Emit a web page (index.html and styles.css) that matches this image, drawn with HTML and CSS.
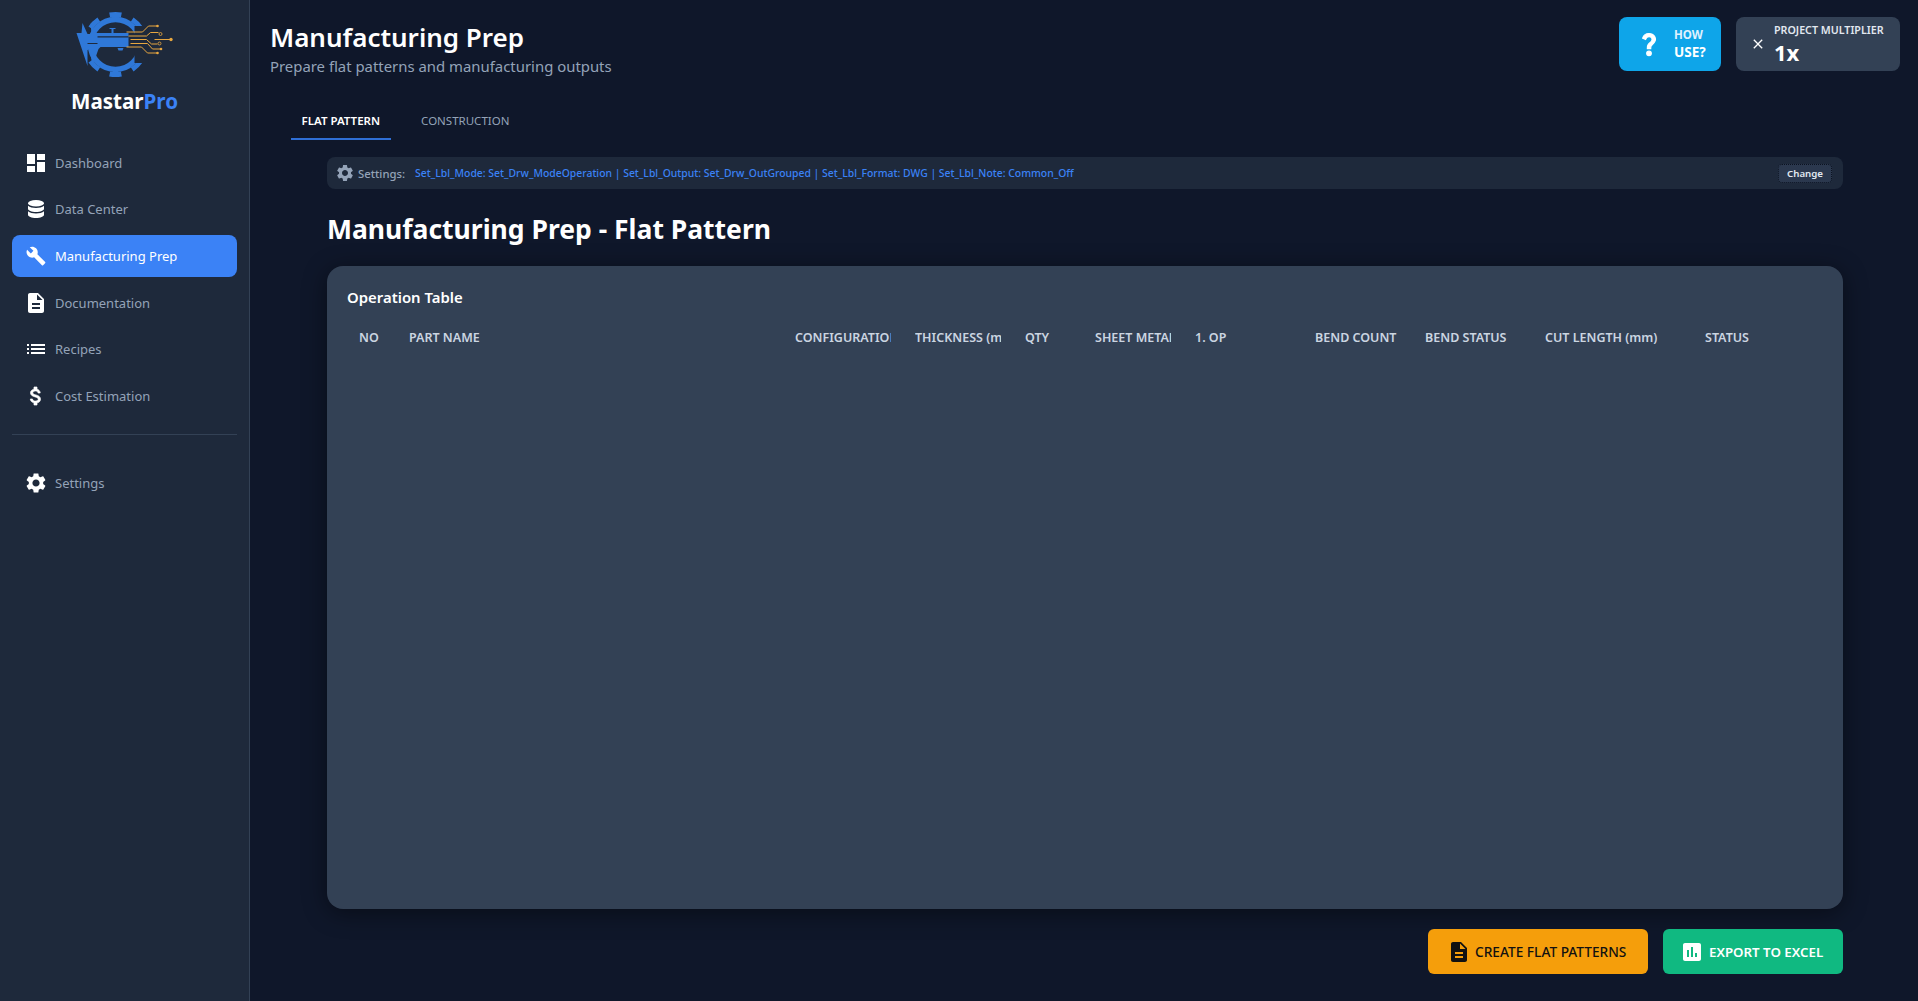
FILE: index.html
```html
<!DOCTYPE html>
<html lang="en">
<head>
<meta charset="utf-8">
<title>MastarPro - Manufacturing Prep</title>
<link rel="stylesheet" href="styles.css">
</head>
<body>
<div class="app">
  <aside class="sidebar">
    <div class="brand">
      <svg class="logo" viewBox="69.5 10 110 70" aria-hidden="true">
        <circle class="logo-ring" cx="115" cy="44.5" r="25"/>
        <circle class="logo-teeth" cx="115" cy="44.5" r="30" pathLength="80" stroke-dasharray="5 5" stroke-dashoffset="2.500"/>
        <path class="logo-mask" d="M134 26h14v37h-14z"/>
        <path class="logo-metal" d="M76 33L81 33L82 23L87 34L91 34L90 23L96 33L128 33L128 47L100 47L98 49L92 66L89 49L87 49L87 66Z"/>
        <path class="logo-slot" d="M97 36.300h31v1.200H97zM87 43h10v1H87z"/>
        <path class="logo-metal" d="M111 28h2v5h-2zM109 28h6v1h-6zM117 48h6l-1 2.500h-4z"/>
        <g class="logo-trace">
          <path d="M126 32h16l6-6h9M128 36h18l4-3.500h8M130 39.500h16l5 4.500h6M154 39.500h16M130 43.500h17l5 5.500h8M126 47h15l6 6h10"/>
        </g>
        <g class="logo-dot">
          <circle cx="157" cy="26" r="1.300"/><circle cx="170.500" cy="39.500" r="1.700"/><circle cx="160.500" cy="49" r="1.300"/><circle cx="157" cy="53" r="1.300"/>
        </g>
        <g class="logo-hollow">
          <circle cx="160" cy="34" r="1.500"/><circle cx="159" cy="43.500" r="1.500"/>
        </g>
      </svg>
      <div class="brand-name">Mastar<span class="brand-accent">Pro</span></div>
    </div>
    <nav class="nav">
      <a class="nav-item"><svg class="icon" viewBox="0 0 24 24"><path d="M3 13h8V3H3v10zm0 8h8v-6H3v6zm10 0h8V11h-8v10zm0-18v6h8V3h-8z"/></svg>Dashboard</a>
      <a class="nav-item"><svg class="icon" viewBox="0 0 24 24"><ellipse cx="12" cy="6.200" rx="8" ry="3.200"/><path d="M4 8.800v3c0 1.800 3.600 3.200 8 3.200s8-1.400 8-3.200v-3c-1.700 1.400-4.700 2.200-8 2.200s-6.300-.8-8-2.200zM4 14.300v3.500c0 1.800 3.600 3.200 8 3.200s8-1.400 8-3.200v-3.500c-1.700 1.400-4.700 2.200-8 2.200s-6.300-.8-8-2.200z"/></svg>Data Center</a>
      <a class="nav-item nav-item-active"><svg class="icon" viewBox="-2 -2 28 28"><path d="M22.700 19l-9.100-9.100c.9-2.300.4-5-1.500-6.900-2-2-5-2.400-7.400-1.300L9 6 6 9 1.600 4.700C.4 7.100.9 10.100 2.900 12.100c1.900 1.900 4.600 2.400 6.900 1.500l9.100 9.100c.4.400 1 .4 1.400 0l2.300-2.300c.5-.4.5-1.100.1-1.400z"/></svg>Manufacturing Prep</a>
      <a class="nav-item"><svg class="icon" viewBox="0 0 24 24"><path d="M14 2H6c-1.100 0-1.990.9-1.990 2L4 20c0 1.100.89 2 1.990 2H18c1.100 0 2-.9 2-2V8l-6-6zm2 16H8v-2h8v2zm0-4H8v-2h8v2zm-3-5V3.500L18.500 9H13z"/></svg>Documentation</a>
      <a class="nav-item"><svg class="icon" viewBox="0 0 24 24"><path d="M3 13h2v-2H3v2zm0 4h2v-2H3v2zm0-8h2V7H3v2zm4 4h14v-2H7v2zm0 4h14v-2H7v2zM7 7v2h14V7H7z"/></svg>Recipes</a>
      <a class="nav-item"><svg class="icon icon-heavy" viewBox="0 0 24 24"><path d="M11.800 10.900c-2.270-.59-3-1.200-3-2.150 0-1.090 1.010-1.850 2.700-1.850 1.780 0 2.440.85 2.500 2.100h2.210c-.07-1.720-1.120-3.300-3.210-3.810V3h-3v2.160c-1.940.42-3.500 1.680-3.500 3.610 0 2.310 1.910 3.460 4.700 4.130 2.500.6 3 1.480 3 2.410 0 .69-.49 1.790-2.700 1.790-2.060 0-2.870-.92-2.980-2.100h-2.200c.12 2.190 1.760 3.420 3.680 3.830V21h3v-2.150c1.950-.37 3.500-1.500 3.500-3.550 0-2.840-2.430-3.810-4.700-4.400z"/></svg>Cost Estimation</a>
      <hr class="nav-divider">
      <a class="nav-item"><svg class="icon" viewBox="0 0 24 24"><path d="M19.140 12.940c.04-.3.06-.61.06-.94 0-.32-.02-.64-.07-.94l2.030-1.580c.18-.14.23-.41.12-.61l-1.920-3.320c-.12-.22-.37-.29-.59-.22l-2.390.96c-.5-.38-1.030-.7-1.620-.94l-.36-2.540c-.04-.24-.24-.41-.48-.41h-3.840c-.24 0-.43.17-.47.41l-.36 2.540c-.59.24-1.130.57-1.620.94l-2.390-.96c-.22-.08-.47 0-.59.22L2.740 8.870c-.12.21-.08.47.12.61l2.030 1.580c-.05.3-.09.63-.09.94s.02.64.07.94l-2.030 1.580c-.18.14-.23.41-.12.61l1.920 3.320c.12.22.37.29.59.22l2.390-.96c.5.38 1.030.7 1.620.94l.36 2.540c.05.24.24.41.48.41h3.840c.24 0 .44-.17.47-.41l.36-2.540c.59-.24 1.130-.56 1.620-.94l2.390.96c.22.08.47 0 .59-.22l1.920-3.320c.12-.22.07-.47-.12-.61l-2.010-1.580zM12 15.600c-1.980 0-3.600-1.620-3.600-3.600s1.620-3.600 3.600-3.600 3.600 1.620 3.600 3.600-1.620 3.600-3.600 3.600z"/></svg>Settings</a>
    </nav>
  </aside>
  <main class="main">
    <header class="topbar">
      <div class="titles">
        <h1 class="page-title">Manufacturing Prep</h1>
        <p class="page-sub">Prepare flat patterns and manufacturing outputs</p>
      </div>
      <div class="top-actions">
        <button class="how-btn"><svg class="how-icon" viewBox="0 0 24 24"><path d="M11.070 12.850c.77-1.390 2.250-2.210 3.110-3.440.91-1.290.4-3.700-2.180-3.700-1.690 0-2.520 1.280-2.870 2.340L6.540 6.960C7.250 4.830 9.180 3 11.990 3c2.350 0 3.960 1.070 4.780 2.410.7 1.150 1.110 3.300.03 4.900-1.200 1.770-2.350 2.310-2.970 3.450-.25.46-.35.76-.35 2.240h-2.890c-.01-.78-.13-2.050.48-3.150zM14 20c0 1.100-.9 2-2 2s-2-.9-2-2 .9-2 2-2 2 .9 2 2z"/></svg><span class="how-text"><span class="how-small">HOW</span><span class="how-big">USE?</span></span></button>
        <div class="multiplier">
          <svg class="mult-icon" viewBox="0 0 24 24"><path d="M19 6.410L17.590 5 12 10.590 6.410 5 5 6.410 10.590 12 5 17.590 6.410 19 12 13.410 17.590 19 19 17.590 13.410 12z"/></svg>
          <div class="mult-text"><span class="mult-label">PROJECT MULTIPLIER</span><span class="mult-value">1x</span></div>
        </div>
      </div>
    </header>
    <div class="tabs">
      <button class="tab tab-active">FLAT PATTERN</button>
      <button class="tab">CONSTRUCTION</button>
    </div>
    <section class="content">
      <div class="settings-bar">
        <svg class="settings-icon" viewBox="0 0 24 24"><path d="M19.140 12.940c.04-.3.06-.61.06-.94 0-.32-.02-.64-.07-.94l2.030-1.580c.18-.14.23-.41.12-.61l-1.920-3.320c-.12-.22-.37-.29-.59-.22l-2.390.96c-.5-.38-1.030-.7-1.620-.94l-.36-2.540c-.04-.24-.24-.41-.48-.41h-3.840c-.24 0-.43.17-.47.41l-.36 2.540c-.59.24-1.130.57-1.620.94l-2.390-.96c-.22-.08-.47 0-.59.22L2.740 8.870c-.12.21-.08.47.12.61l2.030 1.580c-.05.3-.09.63-.09.94s.02.64.07.94l-2.030 1.580c-.18.14-.23.41-.12.61l1.920 3.320c.12.22.37.29.59.22l2.390-.96c.5.38 1.030.7 1.620.94l.36 2.540c.05.24.24.41.48.41h3.840c.24 0 .44-.17.47-.41l.36-2.540c.59-.24 1.130-.56 1.620-.94l2.390.96c.22.08.47 0 .59-.22l1.920-3.320c.12-.22.07-.47-.12-.61l-2.010-1.580zM12 15.600c-1.980 0-3.600-1.620-3.600-3.600s1.620-3.600 3.600-3.600 3.600 1.620 3.600 3.600-1.620 3.600-3.600 3.600z"/></svg>
        <span class="settings-label">Settings:</span>
        <span class="settings-value">Set_Lbl_Mode: Set_Drw_ModeOperation | Set_Lbl_Output: Set_Drw_OutGrouped | Set_Lbl_Format: DWG | Set_Lbl_Note: Common_Off</span>
        <button class="change-btn">Change</button>
      </div>
      <h2 class="section-title">Manufacturing Prep - Flat Pattern</h2>
      <div class="table-card">
        <h3 class="card-title">Operation Table</h3>
        <table class="op-table">
          <colgroup>
            <col class="c-no"><col class="c-part"><col class="c-config"><col class="c-thick"><col class="c-qty"><col class="c-sheet"><col class="c-op"><col class="c-count"><col class="c-bstatus"><col class="c-cut"><col class="c-status">
          </colgroup>
          <thead>
            <tr>
              <th><span class="th-in">NO</span></th>
              <th><span class="th-in">PART NAME</span></th>
              <th><span class="th-in">CONFIGURATION</span></th>
              <th><span class="th-in">THICKNESS (mm)</span></th>
              <th><span class="th-in">QTY</span></th>
              <th><span class="th-in">SHEET METAL</span></th>
              <th><span class="th-in">1. OP</span></th>
              <th><span class="th-in">BEND COUNT</span></th>
              <th><span class="th-in">BEND STATUS</span></th>
              <th><span class="th-in">CUT LENGTH (mm)</span></th>
              <th><span class="th-in">STATUS</span></th>
            </tr>
          </thead>
        </table>
      </div>
      <div class="actions">
        <button class="action action-orange"><svg class="action-icon" viewBox="0 0 24 24"><path d="M14 2H6c-1.100 0-1.990.9-1.990 2L4 20c0 1.100.89 2 1.990 2H18c1.100 0 2-.9 2-2V8l-6-6zm2 16H8v-2h8v2zm0-4H8v-2h8v2zm-3-5V3.500L18.500 9H13z"/></svg>CREATE FLAT PATTERNS</button>
        <button class="action action-green"><svg class="action-icon" viewBox="0 0 24 24"><path d="M19 3H5c-1.100 0-2 .9-2 2v14c0 1.100.9 2 2 2h14c1.100 0 2-.9 2-2V5c0-1.100-.9-2-2-2zM9 17H7v-7h2v7zm4 0h-2V7h2v10zm4 0h-2v-4h2v4z"/></svg>EXPORT TO EXCEL</button>
      </div>
    </section>
  </main>
</div>
</body>
</html>
```
FILE: styles.css
```css
* { box-sizing: border-box; }
html, body { margin: 0; height: 100%; }
body {
  background: #0f172a;
  color: #fff;
  font-family: "Noto Sans", "Open Sans", "Liberation Sans", sans-serif;
  overflow: hidden;
}
button { font-family: inherit; border: 0; cursor: pointer; }
h1, h2, h3, p { margin: 0; }

.app { display: flex; height: 1001px; }

.sidebar {
  width: 250px;
  flex: none;
  background: #1e293b;
  border-right: 1px solid #334155;
  padding: 10px 12px 0;
}
.brand { display: flex; flex-direction: column; align-items: center; height: 131.5px; }
.logo { width: 110px; height: 70px; flex: none; }
.logo-ring { fill: none; stroke: #2f78d8; stroke-width: 5.5; }
.logo-teeth { fill: none; stroke: #2f78d8; stroke-width: 5; }
.logo-mask { fill: #1e293b; }
.logo-metal { fill: #2f78d8; }
.logo-slot { fill: #1e293b; }
.logo-trace path { fill: none; stroke: #e8a740; stroke-width: 1; }
.logo-dot { fill: #e8a740; }
.logo-hollow { fill: none; stroke: #e8a740; stroke-width: .8; }
.brand-name { font-size: 20.6px; font-weight: 700; line-height: 30px; margin-top: 5.5px; }
.brand-accent { color: #3b82f6; }

.nav { display: flex; flex-direction: column; }
.nav-item {
  display: flex;
  align-items: center;
  gap: 7px;
  height: 42.5px;
  padding: 0 12px;
  margin-bottom: 4.1px;
  border-radius: 8px;
  font-size: 13px;
  color: #94a3b8;
}
.nav-item-active { background: #3b82f6; color: #fff; }
.icon { width: 24px; height: 24px; fill: #fff; flex: none; }
.icon-heavy { stroke: #fff; stroke-width: .7; }
.nav-divider { width: 100%; border: 0; border-top: 1px solid #334155; margin: 13px 0 27px; }

.main { flex: 1; min-width: 0; display: flex; flex-direction: column; }
.topbar { display: flex; justify-content: space-between; padding: 17px 18px 0 20px; height: 97px; }
.page-title { font-size: 26px; font-weight: 600; line-height: 38px; margin-top: 1px; }
.page-sub { font-size: 14.9px; line-height: 21px; color: #94a3b8; }
.top-actions { display: flex; gap: 15px; height: 54px; }

.how-btn {
  width: 102px;
  display: flex;
  align-items: center;
  gap: 11px;
  padding: 0 16px;
  border-radius: 8px;
  background: #0ea5e9;
  color: #fff;
}
.how-icon { width: 28px; height: 28px; fill: #fff; stroke: #fff; stroke-width: 1; flex: none; }
.how-text { display: flex; flex-direction: column; text-align: left; }
.how-small { font-size: 11.5px; line-height: 16px; font-weight: 700; color: #e0f2fe; }
.how-big { font-size: 13.5px; line-height: 19px; font-weight: 700; }

.multiplier {
  width: 164px;
  display: flex;
  align-items: center;
  gap: 8px;
  padding: 0 14px;
  border-radius: 8px;
  background: #334155;
}
.mult-icon { width: 16px; height: 16px; fill: #fff; flex: none; margin-bottom: 1px; }
.mult-text { display: flex; flex-direction: column; }
.mult-label { font-size: 10.7px; line-height: 15px; font-weight: 600; color: #e2e8f0; }
.mult-value { font-size: 22px; line-height: 28px; font-weight: 700; }

.tabs { display: flex; padding-left: 41px; height: 44px; }
.tab {
  background: none;
  padding: 5px 10.5px 0;
  font-size: 11.5px;
  color: #94a3b8;
  height: 43px;
  border-bottom: 2px solid transparent;
  margin-right: 20px;
}
.tab-active { color: #fff; font-weight: 600; border-bottom-color: #2f6fd6; }

.content { flex: 1; display: flex; flex-direction: column; padding: 16px 75px 0 77px; }

.settings-bar {
  height: 32px;
  flex: none;
  display: flex;
  align-items: center;
  padding: 0 11px 0 8px;
  border-radius: 8px;
  background: #1e293b;
  font-size: 10.4px;
}
.settings-icon { width: 20px; height: 20px; fill: #94a3b8; flex: none; margin-right: 3px; }
.settings-label { font-size: 11.3px; font-weight: 500; color: #94a3b8; margin-right: 10px; }
.settings-value { color: #3b82f6; flex: 1; white-space: nowrap; font-weight: 500; }
.change-btn {
  background: #2b384e;
  color: #e2e8f0;
  font-size: 9.7px;
  font-weight: 600;
  width: 54px;
  height: 19px;
  padding: 0;
  border-radius: 4px;
  border: 1px dotted #0b1220;
}

.section-title { font-size: 26.5px; font-weight: 700; line-height: 38px; margin: 21px 0 18px; }

.table-card {
  height: 643px;
  flex: none;
  padding: 20px;
  background: #334155;
  border-radius: 16px;
  box-shadow: 0 4px 24px rgba(0, 0, 0, .45);
}
.card-title { font-size: 14.9px; font-weight: 600; line-height: 22px; margin-bottom: 14px; }

.op-table { width: 100%; table-layout: fixed; border-collapse: collapse; }
.c-no { width: 50px; } .c-part { width: 386px; } .c-config { width: 120px; }
.c-thick { width: 110px; } .c-qty { width: 70px; } .c-sheet { width: 100px; }
.c-op { width: 120px; } .c-count { width: 110px; } .c-bstatus { width: 120px; }
.c-cut { width: 160px; } .c-status { width: 130px; }
.op-table th {
  padding: 6px 12px;
  text-align: left;
  font-size: 12.5px;
  font-weight: 600;
  line-height: 20px;
  color: #cbd5e1;
}
.th-in { display: block; overflow: hidden; white-space: nowrap; }

.actions { display: flex; justify-content: flex-end; gap: 15px; margin-top: 20px; }
.action {
  height: 45px;
  display: flex;
  align-items: center;
  gap: 5px;
  border-radius: 6px;
  font-size: 13.3px;
  font-weight: 500;
  white-space: nowrap;
}
.action-orange { width: 220px; padding: 0 19px; background: #f59e0b; color: #111; font-size: 13.7px; gap: 4px; }
.action-green { width: 180px; padding: 0 17px; background: #10b981; color: #fff; font-weight: 600; }
.action-icon { width: 24px; height: 24px; flex: none; fill: currentColor; }
```
